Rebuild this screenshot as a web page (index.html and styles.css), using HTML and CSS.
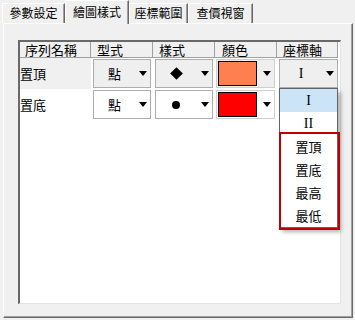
FILE: index.html
```html
<!DOCTYPE html>
<html>
<head>
  <title>繪圖樣式</title>
  <link rel="stylesheet" href="styles.css">
</head>
<body>
  <div class="tabs">
    <div class="tab t1">參數設定</div>
    <div class="tab t2 active">繪圖樣式</div>
    <div class="tab t3">座標範圍</div>
    <div class="tab t4">查價視窗</div>
  </div>

  <div class="panel">
    <div class="grid">
      <div class="row head">
        <div class="hcell h1">序列名稱</div>
        <div class="hcell h2">型式</div>
        <div class="hcell h3">樣式</div>
        <div class="hcell h4">顏色</div>
        <div class="hcell h5">座標軸</div>
      </div>

      <div class="row current">
        <div class="cell name">置頂</div>
        <div class="cell"><div class="combo c-type"><span class="val">點</span><span class="arrow"></span></div></div>
        <div class="cell"><div class="combo c-style"><span class="val"><span class="diamond"></span></span><span class="arrow"></span></div></div>
        <div class="cell"><div class="combo c-color"><span class="swatch coral"></span><span class="arrow"></span></div></div>
        <div class="cell axis">
          <div class="combo c-axis"><span class="val roman">I</span><span class="arrow"></span></div>
          <div class="dropdown">
            <div class="item selected roman">I</div>
            <div class="item roman">II</div>
            <div class="item">置頂</div>
            <div class="item">置底</div>
            <div class="item">最高</div>
            <div class="item">最低</div>
          </div>
          <div class="mark"></div>
        </div>
      </div>

      <div class="row">
        <div class="cell name">置底</div>
        <div class="cell"><div class="combo c-type"><span class="val">點</span><span class="arrow"></span></div></div>
        <div class="cell"><div class="combo c-style"><span class="val"><span class="dot"></span></span><span class="arrow"></span></div></div>
        <div class="cell"><div class="combo c-color"><span class="swatch red"></span><span class="arrow"></span></div></div>
        <div class="cell"></div>
      </div>
    </div>
  </div>
</body>
</html>
```

FILE: styles.css
```css
body {
  margin: 0;
  width: 355px;
  height: 320px;
  background: #f0f0f0;
  font-family: "Noto Sans CJK TC", "Noto Sans", sans-serif;
  font-size: 13px;
  color: #000;
  overflow: hidden;
}

/* tab strip */
.tabs {
  display: flex;
  align-items: flex-end;
  height: 23px;
  padding-left: 2px;
}
.tab {
  box-sizing: border-box;
  height: 20px;
  font-size: 12px;
  line-height: 18px;
  text-align: center;
  background: #f0f0f0;
  border-top: 1px solid #fff;
  border-left: 1px solid #fff;
  border-right: 1px solid #696969;
  box-shadow: inset -1px 0 #a0a0a0;
}
.t1 { width: 63px; }
.t2 { width: 64px; }
.t3 { width: 59px; }
.t4 { width: 65px; }
.tab.active {
  height: 24px;
  line-height: 22px;
  margin-bottom: -1px;
  position: relative;
  z-index: 1;
}

/* tab page */
.panel {
  box-sizing: border-box;
  width: 350px;
  height: 295px;
  margin-left: 3px;
  padding: 16px 0 0 14px;
  border-top: 1px solid #fff;
  border-left: 1px solid #fff;
  border-right: 1px solid #696969;
  border-bottom: 1px solid #696969;
  box-shadow: inset -1px -1px #a0a0a0;
}

/* data grid */
.grid {
  box-sizing: border-box;
  width: 323px;
  height: 264px;
  background: #fff;
  border-top: 2px solid #696969;
  border-left: 2px solid #696969;
  border-right: 1px solid #e3e3e3;
  border-bottom: 1px solid #e3e3e3;
}
.row {
  display: grid;
  grid-template-columns: 71px 62px 62px 62px 61px;
  height: 31px;
}
.row.head {
  height: 16px;
}
.hcell {
  box-sizing: border-box;
  line-height: 15px;
  background: #f0f0f0;
  border-right: 1px solid #a0a0a0;
  border-bottom: 1px solid #a0a0a0;
  white-space: nowrap;
}
.h1 { padding-left: 5px; }
.h2 { padding-left: 6px; }
.h3 { padding-left: 6px; }
.h4 { padding-left: 7px; }
.h5 { padding-left: 6px; }

.cell {
  position: relative;
}
.cell.name {
  line-height: 31px;
}
.current .name {
  background: #f0f0f0;
}

/* combo boxes */
.combo {
  box-sizing: border-box;
  height: 29px;
  margin: 1px 2px 0 2px;
  display: flex;
  align-items: center;
  background: #fff;
  border: 1px solid #adadad;
}
.current .combo {
  background: #efefef;
}
.c-color {
  margin: 1px 2px 0 1px;
  border-color: #d0d0d0;
}
.c-axis {
  margin: 1px 0 0 2px;
}
.val {
  flex: 1;
  display: flex;
  justify-content: center;
  align-items: center;
  padding-left: 2px;
}
.roman {
  font-family: "Liberation Serif", serif;
  font-size: 14px;
}
.arrow {
  width: 0;
  height: 0;
  margin: 0 3px 0 6px;
  border-left: 4px solid transparent;
  border-right: 4px solid transparent;
  border-top: 5px solid #000;
}
.diamond {
  width: 9px;
  height: 9px;
  background: #000;
  transform: rotate(45deg);
}
.dot {
  width: 8px;
  height: 8px;
  border-radius: 50%;
  background: #000;
  margin-left: -2px;
}
.swatch {
  box-sizing: border-box;
  width: 40px;
  height: 25px;
  margin-left: 1px;
  border: 1px solid #000;
}
.coral { background: #ff7f50; }
.red { background: #ff0000; }

/* open list of the axis combo */
.dropdown {
  position: absolute;
  top: 30px;
  left: 2px;
  width: 59px;
  box-sizing: border-box;
  background: #fff;
  border: 1px solid #646464;
  box-shadow: 3px 4px 4px rgba(0, 0, 0, 0.3);
  z-index: 2;
}
.item {
  height: 23px;
  line-height: 23px;
  text-align: center;
}
.item.selected {
  background: #cce4f7;
}
.mark {
  position: absolute;
  top: 74px;
  left: 2px;
  width: 61px;
  height: 98px;
  box-sizing: border-box;
  border: 2px solid #c00000;
  z-index: 3;
}
```
